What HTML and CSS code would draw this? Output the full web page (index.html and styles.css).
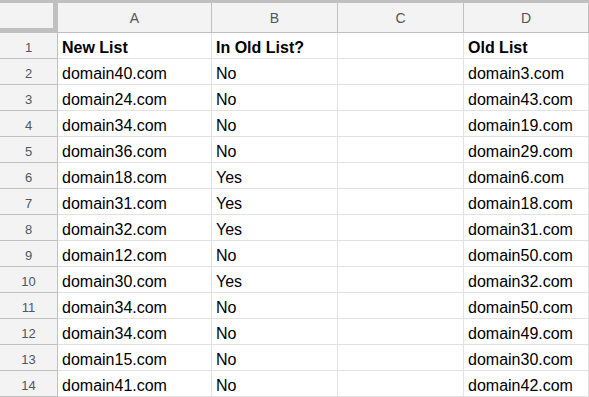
FILE: index.html
```html
<!DOCTYPE html>
<html>
<head>
<meta charset="utf-8">
<link rel="stylesheet" href="styles.css">
</head>
<body>
<div class="sheet">
  <div class="corner"></div>
  <div class="colhead">A</div>
  <div class="colhead">B</div>
  <div class="colhead">C</div>
  <div class="colhead">D</div>

  <div class="rowhead">1</div><div class="cell bold">New List</div><div class="cell bold">In Old List?</div><div class="cell"></div><div class="cell bold">Old List</div>
  <div class="rowhead">2</div><div class="cell">domain40.com</div><div class="cell">No</div><div class="cell"></div><div class="cell">domain3.com</div>
  <div class="rowhead">3</div><div class="cell">domain24.com</div><div class="cell">No</div><div class="cell"></div><div class="cell">domain43.com</div>
  <div class="rowhead">4</div><div class="cell">domain34.com</div><div class="cell">No</div><div class="cell"></div><div class="cell">domain19.com</div>
  <div class="rowhead">5</div><div class="cell">domain36.com</div><div class="cell">No</div><div class="cell"></div><div class="cell">domain29.com</div>
  <div class="rowhead">6</div><div class="cell">domain18.com</div><div class="cell">Yes</div><div class="cell"></div><div class="cell">domain6.com</div>
  <div class="rowhead">7</div><div class="cell">domain31.com</div><div class="cell">Yes</div><div class="cell"></div><div class="cell">domain18.com</div>
  <div class="rowhead">8</div><div class="cell">domain32.com</div><div class="cell">Yes</div><div class="cell"></div><div class="cell">domain31.com</div>
  <div class="rowhead">9</div><div class="cell">domain12.com</div><div class="cell">No</div><div class="cell"></div><div class="cell">domain50.com</div>
  <div class="rowhead">10</div><div class="cell">domain30.com</div><div class="cell">Yes</div><div class="cell"></div><div class="cell">domain32.com</div>
  <div class="rowhead">11</div><div class="cell">domain34.com</div><div class="cell">No</div><div class="cell"></div><div class="cell">domain50.com</div>
  <div class="rowhead">12</div><div class="cell">domain34.com</div><div class="cell">No</div><div class="cell"></div><div class="cell">domain49.com</div>
  <div class="rowhead">13</div><div class="cell">domain15.com</div><div class="cell">No</div><div class="cell"></div><div class="cell">domain30.com</div>
  <div class="rowhead">14</div><div class="cell">domain41.com</div><div class="cell">No</div><div class="cell"></div><div class="cell">domain42.com</div>
</div>
</body>
</html>
```
FILE: styles.css
```css
html, body {
  margin: 0;
  padding: 0;
  background: #ffffff;
  overflow: hidden;
}
.sheet {
  display: grid;
  grid-template-columns: 58px 154px 126px 126px 1fr;
  grid-template-rows: 30px;
  grid-auto-rows: 26px;
  border-top: 3px solid #c0c0c0;
  font-family: "Liberation Sans", Arial, sans-serif;
}
.sheet > div {
  box-sizing: border-box;
}
.corner {
  background: #f3f3f3;
  border-right: 5px solid #c0c0c0;
  border-bottom: 5px solid #c0c0c0;
}
.colhead {
  background: #f3f3f3;
  border-right: 1px solid #c0c0c0;
  border-bottom: 1px solid #c0c0c0;
  color: #555555;
  font-size: 14px;
  display: flex;
  align-items: center;
  justify-content: center;
  padding-top: 1px;
}
.rowhead {
  background: #f3f3f3;
  border-right: 1px solid #c0c0c0;
  border-bottom: 1px solid #c0c0c0;
  color: #4f5663;
  font-size: 13px;
  display: flex;
  align-items: center;
  justify-content: center;
  padding-top: 3px;
}
.cell {
  border-right: 1px solid #e2e2e2;
  border-bottom: 1px solid #e2e2e2;
  color: #000000;
  font-size: 16px;
  line-height: 23px;
  padding: 3px 4px 0 4px;
  white-space: nowrap;
  overflow: hidden;
}
.bold {
  font-weight: bold;
}
```
